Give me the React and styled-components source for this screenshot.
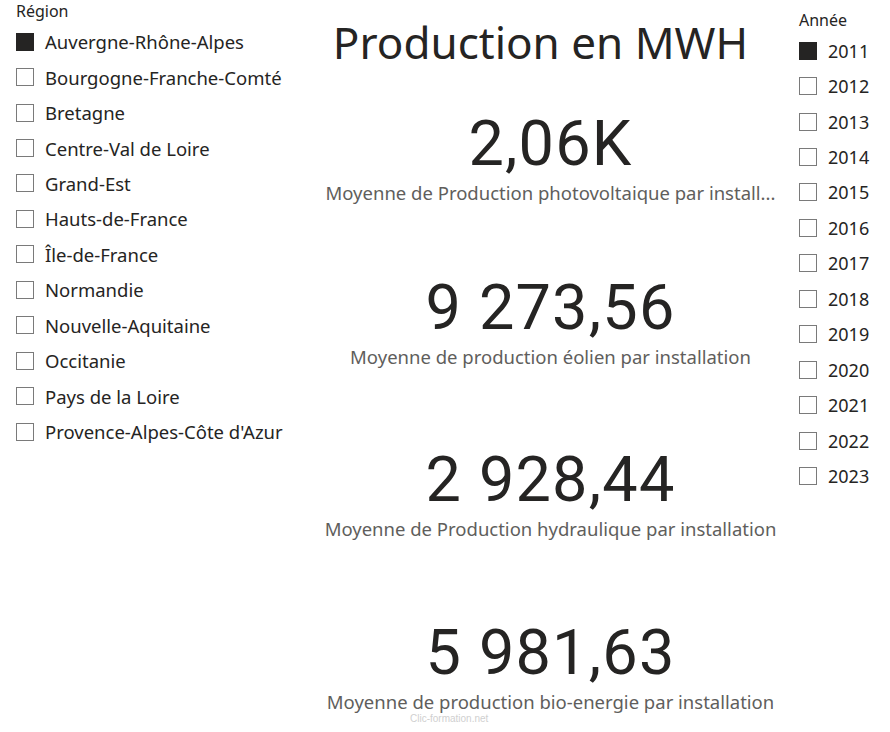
import styled, { createGlobalStyle } from 'styled-components'

const GlobalStyle = createGlobalStyle`
  body {
    margin: 0;
    background: #ffffff;
    font-family: "Noto Sans", "Open Sans", sans-serif;
    color: #252423;
  }
`

const Page = styled.div`
  width: 890px;
  height: 732px;
  display: grid;
  grid-template-columns: 305px 1fr 94px;
  overflow: hidden;
  position: relative;
`

const Slicer = styled.div`
  display: flex;
  flex-direction: column;
  padding-left: ${(p) => p.$left}px;
  padding-top: ${(p) => p.$top}px;
`

const SlicerTitle = styled.div`
  font-size: ${(p) => p.$size}px;
  line-height: 20px;
  height: ${(p) => p.$height}px;
  color: #252423;
`

const Row = styled.div`
  display: flex;
  align-items: center;
  height: 35.45px;
  gap: ${(p) => p.$gap}px;
  font-size: ${(p) => p.$size}px;
  color: #252423;
  white-space: nowrap;
`

const Box = styled.span`
  width: 18px;
  height: 18px;
  flex: none;
  box-sizing: border-box;
  border: 1px solid ${(p) => (p.$checked ? '#252423' : '#7a7a7a')};
  background: ${(p) => (p.$checked ? '#252423' : '#ffffff')};
`

const Center = styled.div`
  display: flex;
  flex-direction: column;
  align-items: center;
`

const Title = styled.h1`
  margin: 14px 20px 0 0;
  font-weight: 400;
  font-size: 44px;
  line-height: 56px;
  color: #252423;
`

const Card = styled.div`
  display: flex;
  flex-direction: column;
  align-items: center;
  margin-top: ${(p) => p.$space}px;
`

const Value = styled.div`
  font-family: Roboto, "DejaVu Sans", sans-serif;
  font-size: 63px;
  line-height: 66px;
  letter-spacing: 1.2px;
  color: #252423;
`

const Label = styled.div`
  font-size: 18.5px;
  line-height: 20px;
  margin-top: 6px;
  color: #605e5c;
  white-space: nowrap;
`

const Watermark = styled.div`
  position: absolute;
  left: 410px;
  top: 714px;
  font-family: "Liberation Sans", Arial, sans-serif;
  font-size: 10px;
  line-height: 10px;
  color: #d0d0d0;
`

const regions = [
  'Auvergne-Rhône-Alpes',
  'Bourgogne-Franche-Comté',
  'Bretagne',
  'Centre-Val de Loire',
  'Grand-Est',
  'Hauts-de-France',
  'Île-de-France',
  'Normandie',
  'Nouvelle-Aquitaine',
  'Occitanie',
  'Pays de la Loire',
  "Provence-Alpes-Côte d'Azur",
]

const years = [2011, 2012, 2013, 2014, 2015, 2016, 2017, 2018, 2019, 2020, 2021, 2022, 2023]

const cards = [
  { value: '2,06K', label: 'Moyenne de Production photovoltaique par install...', space: 41 },
  { value: '9 273,56', label: 'Moyenne de production éolien par installation', space: 72 },
  { value: '2 928,44', label: 'Moyenne de Production hydraulique par installation', space: 80 },
  { value: '5 981,63', label: 'Moyenne de production bio-energie par installation', space: 81 },
]

const App = () => {
  return (
    <>
      <GlobalStyle />
      <Page>
        <Slicer $left={16} $top={1}>
          <SlicerTitle $size={16} $height={23}>Région</SlicerTitle>
          {regions.map((r, i) => (
            <Row key={r} $gap={11} $size={18.5}>
              <Box $checked={i === 0} />
              {r}
            </Row>
          ))}
        </Slicer>
        <Center>
          <Title>Production en MWH</Title>
          {cards.map((c) => (
            <Card key={c.value} $space={c.space}>
              <Value>{c.value}</Value>
              <Label>{c.label}</Label>
            </Card>
          ))}
        </Center>
        <Slicer $left={3} $top={10}>
          <SlicerTitle $size={16} $height={23}>Année</SlicerTitle>
          {years.map((y, i) => (
            <Row key={y} $gap={11} $size={18}>
              <Box $checked={i === 0} />
              {y}
            </Row>
          ))}
        </Slicer>
        <Watermark>Clic-formation.net</Watermark>
      </Page>
    </>
  )
}

export default App
